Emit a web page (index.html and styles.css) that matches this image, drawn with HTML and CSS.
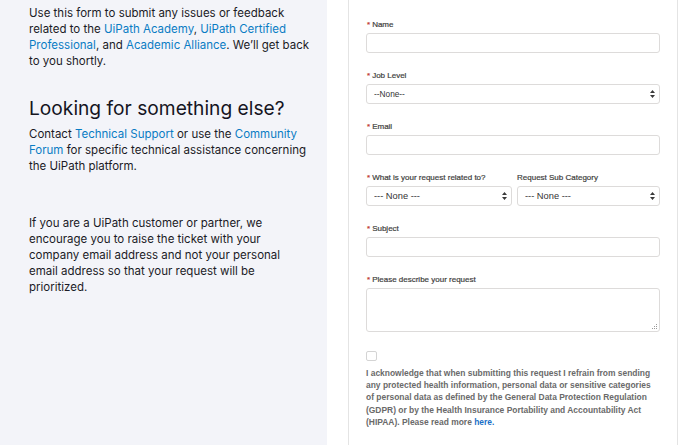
FILE: index.html
```html
<!DOCTYPE html>
<html lang="en">
<head>
<meta charset="utf-8">
<title>Support form</title>
<link rel="stylesheet" href="styles.css">
</head>
<body>
<div class="page">
  <aside class="intro">
    <p class="lead">Use this form to submit any issues or feedback related to the <a href="#">UiPath Academy</a>, <a href="#">UiPath Certified Professional</a>, and <a href="#">Academic Alliance</a>. We’ll get back to you shortly.</p>
    <h2 class="heading">Looking for something else?</h2>
    <p class="contact">Contact <a href="#">Technical Support</a> or use the <a href="#">Community Forum</a> for specific technical assistance concerning the UiPath platform.</p>
    <p class="note">If you are a UiPath customer or partner, we encourage you to raise the ticket with your company email address and not your personal email address so that your request will be prioritized.</p>
  </aside>
  <main class="main">
    <form class="card">
      <div class="field">
        <label class="label"><span class="req">*</span>Name</label>
        <input class="input" type="text">
      </div>
      <div class="field">
        <label class="label"><span class="req">*</span>Job Level</label>
        <div class="select-wrap">
          <select class="select small"><option>--None--</option></select>
          <svg class="arrows" width="5" height="10" viewBox="0 0 5 10"><path d="M2.5 1 L5 4 L0 4 Z M0 6 L5 6 L2.5 9 Z" fill="#3a3a3a"/></svg>
        </div>
      </div>
      <div class="field">
        <label class="label"><span class="req">*</span>Email</label>
        <input class="input" type="text">
      </div>
      <div class="field row">
        <div class="col">
          <label class="label"><span class="req">*</span>What is your request related to?</label>
          <div class="select-wrap">
            <select class="select"><option>--- None ---</option></select>
            <svg class="arrows" width="5" height="10" viewBox="0 0 5 10"><path d="M2.5 1 L5 4 L0 4 Z M0 6 L5 6 L2.5 9 Z" fill="#3a3a3a"/></svg>
          </div>
        </div>
        <div class="col">
          <label class="label">Request Sub Category</label>
          <div class="select-wrap">
            <select class="select"><option>--- None ---</option></select>
            <svg class="arrows" width="5" height="10" viewBox="0 0 5 10"><path d="M2.5 1 L5 4 L0 4 Z M0 6 L5 6 L2.5 9 Z" fill="#3a3a3a"/></svg>
          </div>
        </div>
      </div>
      <div class="field">
        <label class="label"><span class="req">*</span>Subject</label>
        <input class="input" type="text">
      </div>
      <div class="field">
        <label class="label"><span class="req">*</span>Please describe your request</label>
        <div class="textarea-wrap">
          <textarea class="textarea"></textarea>
          <svg class="grip" width="5" height="5" viewBox="0 0 5 5"><g fill="#9a9a9a"><rect x="4" y="0" width="1" height="1"/><rect x="2" y="2" width="1" height="1"/><rect x="4" y="2" width="1" height="1"/><rect x="0" y="4" width="1" height="1"/><rect x="2" y="4" width="1" height="1"/><rect x="4" y="4" width="1" height="1"/></g></svg>
        </div>
      </div>
      <div class="consent">
        <span class="checkbox"></span>
        <p class="consent-text">I acknowledge that when submitting this request I refrain from sending any protected health information, personal data or sensitive categories of personal data as defined by the General Data Protection Regulation (GDPR) or by the Health Insurance Portability and Accountability Act (HIPAA). Please read more <a href="#">here.</a></p>
      </div>
    </form>
  </main>
</div>
</body>
</html>
```
FILE: styles.css
```css
* { box-sizing: border-box; }
html, body { margin: 0; padding: 0; height: 100%; background: #ffffff; }
body { overflow: hidden; }

.page {
  display: flex;
  height: 445px;
}

.intro {
  width: 327px;
  flex: none;
  background: #f3f4f9;
  padding: 5px 17px 0 29px;
  font-family: Inter, "Noto Sans", sans-serif;
  font-size: 11.5px;
  line-height: 16px;
  color: #1b1b26;
}
.intro p { margin: 0; }
.intro a { color: #0a7cc4; text-decoration: none; }

.heading {
  margin: 27px 0 5px;
  font-size: 19.2px;
  line-height: 25px;
  font-weight: 400;
  color: #15151f;
}
.note { margin-top: 41px !important; }

.main {
  flex: 1;
  padding-left: 21px;
}

.card {
  width: 330px;
  height: 100%;
  border-left: 1px solid #e4e4e4;
  border-right: 1px solid #e4e4e4;
  padding: 20px 17px 0 17px;
  font-family: "Liberation Sans", Arial, sans-serif;
}

.field { margin-bottom: 18px; }
.row {
  display: grid;
  grid-template-columns: 146px 1fr;
  column-gap: 5px;
}

.label {
  display: block;
  font-size: 8px;
  line-height: 10px;
  height: 10px;
  margin-bottom: 3px;
  color: #3e3e3c;
  white-space: nowrap;
  -webkit-text-stroke: 0.2px #3e3e3c;
}
.req { color: #c23934; margin: 0 2px 0 1px; -webkit-text-stroke: 0.2px #c23934; }

.input, .select, .textarea {
  display: block;
  width: 100%;
  margin: 0;
  height: 20px;
  border: 1px solid #dddbda;
  border-radius: 3px;
  background: #fff;
  outline: none;
  font-family: "Liberation Sans", Arial, sans-serif;
}

.select-wrap, .textarea-wrap { position: relative; }
.select {
  appearance: none;
  -webkit-appearance: none;
  padding: 0 0 0 7px;
  font-size: 9.3px;
  color: #333;
}
.select.small { font-size: 8.3px; }
.arrows {
  position: absolute;
  right: 5px;
  top: 5px;
}

.textarea {
  height: 44px;
  resize: none;
}
.grip {
  position: absolute;
  right: 3px;
  bottom: 3px;
}

.consent { padding-top: 1px; }
.checkbox {
  display: block;
  width: 11px;
  height: 10px;
  border: 1px solid #d4d4d4;
  border-radius: 2px;
  margin-bottom: 6px;
}
.consent-text {
  margin: 0;
  font-size: 8.45px;
  line-height: 12.2px;
  font-weight: 700;
  color: #6a6a6a;
}
.consent-text a { color: #1a6fc7; text-decoration: none; }
```
